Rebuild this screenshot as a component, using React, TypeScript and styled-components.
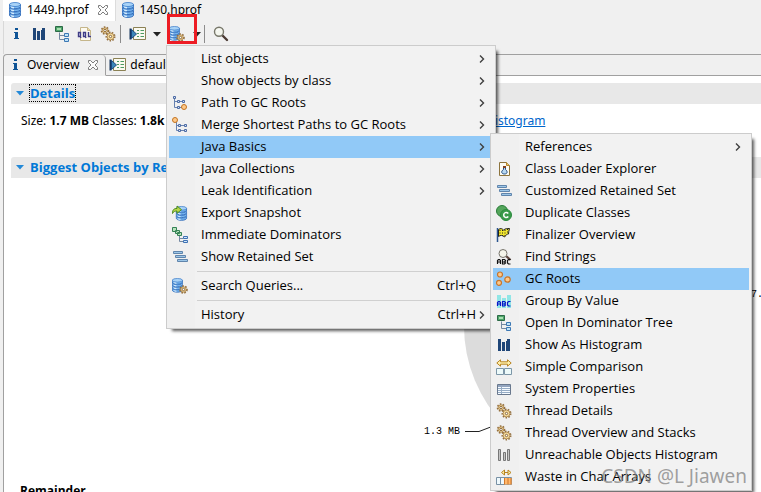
import React from "react";
import styled, { createGlobalStyle, css } from "styled-components";

const GlobalStyle = createGlobalStyle`
  *, *::before, *::after { box-sizing: border-box; }
  html, body { margin: 0; height: 100%; overflow: hidden; }
  body { background: #f0f0f0; color: #000; font-family: "Open Sans", "Noto Sans", sans-serif; font-size: 13px; line-height: 16px; }
  #root { height: 100%; }
  button { margin: 0; padding: 0; border: 0; background: none; color: inherit; font: inherit; text-align: left; }
  svg { display: block; flex: none; }
`;

/* ---------- icons ---------- */

const Icon = ({ children }: { children: React.ReactNode }) => (
  <svg width="16" height="16" viewBox="0 0 16 16" aria-hidden="true">{children}</svg>
);

const Disc = ({ y }: { y: number }) => (
  <>
    <path d={`M2.500 ${y}v2c0 1.200 2.400 2.200 5.500 2.200s5.500-1 5.500-2.200v-2z`} fill="#79b8f0" stroke="#2c67b6" strokeWidth=".9" />
    <path d={`M4 ${y + 1.500}v1.500c.8.6 1.800.8 3 .9V${y + 2}z`} fill="#d3ebfd" />
    <ellipse cx="8" cy={y} rx="5.500" ry="2" fill="#a9d3f7" stroke="#3c7cca" strokeWidth=".8" />
  </>
);

const Cylinder = () => (
  <>
    <Disc y={11.200} />
    <Disc y={8.300} />
    <Disc y={5.400} />
    <Disc y={2.500} />
  </>
);

const Gear = ({ x, y, r }: { x: number; y: number; r: number }) => (
  <g>
    <circle cx={x} cy={y} r={r} fill="none" stroke="#94703f" strokeWidth="2" strokeDasharray="1.500 1.300" />
    <circle cx={x} cy={y} r={r - 0.600} fill="#f6dc9c" stroke="#a57c45" strokeWidth=".8" />
    <circle cx={x} cy={y} r="1.200" fill="#fff" stroke="#7d5a30" strokeWidth=".9" />
  </g>
);

const DbIcon = () => <Icon><Cylinder /></Icon>;
const DbGearIcon = () => (
  <Icon>
    <g transform="translate(-2 0) scale(.92)"><Cylinder /></g>
    <Gear x={11.500} y={11.500} r={3.300} />
  </Icon>
);
const ExportIcon = () => (
  <Icon>
    <g transform="translate(2 1) scale(.93)"><Cylinder /></g>
    <path d="M.5 8.500C.5 4.500 2 3.500 5 3.500V1l4.500 3.700L5 8.300V6C3 6 1.500 6.500.5 8.500z" fill="#b7d84a" stroke="#4f8a1f" />
  </Icon>
);
const InfoIcon = () => (
  <Icon><path d="M7 2h3v2H7zM6 6h4v6h1v1H6v-1h1V7H6z" fill="#0f5496" /></Icon>
);
const BarsIcon = ({ muted = false }: { muted?: boolean }) => (
  <Icon>
    {muted ? (
      <path d="M2.500 2.500h2v11h-2zM7.500 5.500h2v8h-2zM11.500 2.500h2v11h-2z" fill="#c4c4c4" stroke="#777" />
    ) : (
      <path d="M2 2h3v12H2zM6 5h3v9H6zM10 4h1v10h-1zM11 2h3v12h-3z" fill="#1f4678" />
    )}
  </Icon>
);
const TreeIcon = () => (
  <Icon>
    <path d="M5.500 6.500v7h5M5.500 9.500h5" fill="none" stroke="#7488a2" />
    <path d="M1.500.5h7v5h-7z" fill="#4fa56a" stroke="#2c6a47" />
    <path d="M3 2h4v2H3z" fill="#a8dfb0" />
    <path d="M10.500 7.500h4v3h-4zM10.500 12.500h4v3h-4z" fill="#bfe2f8" stroke="#3c78b4" />
  </Icon>
);
const OqlIcon = () => (
  <Icon>
    <path d="M3.500 1.500h7l3 3v10h-10z" fill="#fdfaf0" stroke="#c5b68b" />
    <path d="M10.500 1.500v3h3" fill="#ead9a3" stroke="#c5b68b" />
    <path d="M1.500 6.500h2v4h-2zM6.500 6.500h2v4h-2zM11.500 6v4.500H14M3 10l1 2M8 10l1 2" fill="#eef" stroke="#3f3c85" strokeWidth="1.400" />
  </Icon>
);
const GearsIcon = () => (
  <Icon><Gear x={5} y={4.500} r={3.300} /><Gear x={10.500} y={10.500} r={4} /></Icon>
);
const QueryIcon = () => (
  <svg width="17" height="16" viewBox="0 0 17 16" aria-hidden="true">
    <path d="M4.500 1.500h12v12h-12z" fill="#fbfaf0" stroke="#8b8154" />
    <path d="M8 4.500h2M8 7.500h2M8 10.500h2M11.500 4.500h3.500M11.500 7.500h3.500M11.500 10.500h3.500" stroke="#4d9a62" />
    <path d="M1.500 2.500v11" stroke="#16365f" strokeWidth="2" />
    <path d="M2.500 3.500 7.500 8l-5 4.500z" fill="#3d87b8" stroke="#1b4a82" />
  </svg>
);
const SearchIcon = () => (
  <Icon>
    <path d="m9.500 9.500 4.500 4.500" stroke="#4c3b34" strokeWidth="2.400" strokeLinecap="round" />
    <circle cx="6" cy="5.800" r="4.500" fill="#f4f6ee" stroke="#77776a" strokeWidth="1.400" />
    <path d="M4 5c.4-1 1.200-1.500 2.400-1.500" fill="none" stroke="#fff" />
  </Icon>
);
const PathIcon = ({ rootFirst = false }: { rootFirst?: boolean }) => (
  <Icon>
    {rootFirst ? (
      <>
        <path d="M4.500 5v8.500h9M4.500 8.500h9" fill="none" stroke="#6681b0" />
        <path d="M6.500 7.500h2v2h-2zM12.500 7.500h2v2h-2zM6.500 12.500h2v2h-2zM12.500 12.500h2v2h-2z" fill="#d9e4f4" stroke="#4c6ba4" />
        <circle cx="3" cy="3" r="2.500" fill="#fdc98a" stroke="#c4721f" />
      </>
    ) : (
      <>
        <path d="M2.500 2v10.500h9M2.500 6.500h9" fill="none" stroke="#6681b0" />
        <path d="M1.500 1.500h2v2h-2zM5.500 5.500h2v2h-2zM10.500 5.500h2v2h-2zM5.500 11.500h2v2h-2z" fill="#d9e4f4" stroke="#4c6ba4" />
        <circle cx="12" cy="12" r="2.500" fill="#fdc98a" stroke="#c4721f" />
      </>
    )}
  </Icon>
);
const DominatorsIcon = () => (
  <Icon>
    <path d="M7.500 9v5.500h4M7.500 11.500h4" fill="none" stroke="#7488a2" />
    <path d="M.5.5h4v4h-4zM3.500 3.500h4v3h-4zM5.500 5.500h4v3h-4z" fill="#b8e2bd" stroke="#348154" />
    <path d="M11.500 9.500h4v2h-4zM11.500 13.500h4v2h-4z" fill="#d1e7fa" stroke="#3f72b4" />
  </Icon>
);
const RetainedIcon = () => (
  <Icon>
    <path d="M1.500 2.500h9v2h-9zM3.500 6.500h10v2h-10zM5.500 10.500h10v2h-10z" fill="#9cc6e8" stroke="#6085ac" />
  </Icon>
);
const LoaderIcon = () => (
  <Icon>
    <path d="M3.500 1.500h7l3 3v10h-10z" fill="#fdfcf4" stroke="#8d743e" />
    <path d="M10.500 1.500v3h3" fill="#e7c56b" stroke="#bb872c" />
    <path d="M7.500 6.500v2c-3 2-2 4.500 1 4.500s3.500-2.500 1-4.500v-2z" fill="#b9d9f3" stroke="#214b83" />
    <path d="M7 5h3v2H7z" fill="#834221" />
  </Icon>
);
const DuplicateIcon = () => (
  <Icon>
    <circle cx="6" cy="6" r="5.500" fill="#55a65c" stroke="#287c37" />
    <circle cx="10" cy="10" r="5.500" fill="#3a9b4b" stroke="#2b8a3d" />
    <path d="M12.300 8.500c-1.800-2-4.600-.8-4.600 1.500s2.800 3.500 4.600 1.500" fill="none" stroke="#fff" strokeWidth="1.500" />
  </Icon>
);
const FlagIcon = () => (
  <Icon>
    <path d="M1.500 1v14" stroke="#2a5590" strokeWidth="1.500" />
    <path d="M2.500 2.500c2-1.500 3.500-1 5 .5 2-1.500 3.500-1.500 6-1.500-.5 2-1 3.500-1 5.500-1.500 0-2.500 1-4 3-2-2-4-2-6-.5z" fill="#f2e72e" stroke="#222" />
    <path d="M4 3v5M6.500 3v6M9 3v6M11.500 2v5" stroke="#222" strokeDasharray="1 1.500" />
  </Icon>
);
const Letters = ({ color }: { color: string }) => (
  <path d="M1.500 15v-3.500l1-1h1l1 1V15M1.500 13h3M6.500 10.500h2l1 1v.5l-1 1 1 1-1 1h-2zM6.500 13h2M14.500 10.500h-2l-1 1V14l1 1h2" fill="none" stroke={color} strokeWidth="1.200" />
);
const FindIcon = () => (
  <Icon>
    <path d="m10 7 4.500 4" stroke="#5c443c" strokeWidth="2.200" />
    <circle cx="7" cy="4.500" r="4" fill="#f4f4ea" stroke="#76736b" />
    <Letters color="#111" />
  </Icon>
);
const GroupIcon = () => (
  <Icon>
    <path d="M1 2h4v13H1zM6 5h4v10H6zM11 2h4v13h-4z" fill="#91e6e6" />
    <g transform="translate(0 -2)"><Letters color="#0815c8" /></g>
  </Icon>
);
const RootsIcon = () => (
  <Icon>
    <g fill="#fcc98c" stroke="#c9752a" strokeWidth="1.200">
      <circle cx="4" cy="3.500" r="2.500" /><circle cx="3" cy="11.800" r="2.500" /><circle cx="11.500" cy="8.500" r="2.700" />
    </g>
  </Icon>
);
const CompareIcon = () => (
  <Icon>
    <path d="M.8 4 4.500.8v2h7v-2L15.200 4l-3.700 3.200v-2h-7v2z" fill="#fff0aa" stroke="#b88420" />
    <path d="M.5 9.500h7v6h-7zM8.500 9.500h7v6h-7z" fill="#edfafa" stroke="#7d97a8" />
  </Icon>
);
const TableIcon = () => (
  <Icon>
    <path d="M1.500 3.500h13v10h-13z" fill="#f6fbff" stroke="#69788d" />
    <path d="M2 4h12v2H2z" fill="#93a5bf" />
    <path d="M5.500 6v7M2 7.500h12M2 9.500h12M2 11.500h12" stroke="#96acc5" />
  </Icon>
);
const WasteIcon = () => (
  <Icon>
    <path d="M5.500 3.500 8.500 1v5zM15 3.500 12 1v5zM8 3.500h4" fill="#fff0aa" stroke="#b88420" />
    <path d="M.5 8.500h15v7H.5z" fill="#eef8fc" stroke="#7891a5" />
    <path d="M8 9h7.500v6.500H8z" fill="#ffb76b" />
    <path d="M4.500 9v6" stroke="#7891a5" />
    <path d="M8.500 9v6.500M12 9v6.500M15 9v6.500" stroke="#d27629" />
  </Icon>
);
const CloseIcon = () => (
  <svg width="12" height="12" viewBox="0 0 12 12" aria-hidden="true">
    <path d="M1.500 1.500h2L6 4l2.500-2.500h2v2L8 6l2.500 2.500v2h-2L6 8l-2.500 2.500h-2v-2L4 6 1.500 3.500z" fill="#fbfbfb" stroke="#7c7c7c" />
  </svg>
);
const Chevron = () => (
  <svg width="6" height="10" viewBox="0 0 6 10" aria-hidden="true">
    <path d="M1 1.500 4.500 5 1 8.500" fill="none" stroke="#3f3f3f" strokeWidth="1.400" />
  </svg>
);
const Triangle = ({ blue = false }: { blue?: boolean }) => (
  <svg width="8" height="5" viewBox="0 0 8 5" aria-hidden="true">
    <path d="M0 0h8L4 4.500z" fill={blue ? "#2389d8" : "#222"} />
  </svg>
);

/* ---------- page parts ---------- */

const Page = styled.div`
  position: relative;
  display: flex;
  flex-direction: column;
  height: 100%;
  padding-left: 3px;
  overflow: hidden;
  background: #f0f0f0;
`;

const FileTabs = styled.div`
  display: flex;
  flex: none;
  height: 21px;
`;

const FileTab = styled.button<{ $active?: boolean }>`
  display: flex;
  align-items: center;
  gap: 4px;
  padding: 0 6px 2px 4px;
  border-right: 1px solid ${(p) => (p.$active ? "#dcdcdc" : "transparent")};
  background: ${(p) => (p.$active ? "#fff" : "transparent")};
  font-family: "Noto Sans", sans-serif;
  font-size: 12px;
  svg:nth-of-type(2) { margin-left: 4px; }
`;

const Toolbar = styled.div`
  display: flex;
  flex: none;
  align-items: center;
  height: 33px;
  padding-bottom: 7px;
  border-left: 1px solid #d8d8d8;
`;

const Tool = styled.button<{ $wide?: boolean }>`
  position: relative;
  display: flex;
  flex: none;
  justify-content: center;
  align-items: center;
  width: ${(p) => (p.$wide ? 28 : 23)}px;
  height: 22px;
`;

const ToolArrow = styled(Tool)`
  width: 12px;
`;

const Divider = styled.span`
  width: 1px;
  height: 18px;
  margin: 0 2px 0 1px;
  background: #8c8c8c;
`;

const RedMark = styled.span`
  position: absolute;
  z-index: 5;
  inset: -9px -6px 1px 4px;
  border: 3px solid #ed1c24;
`;

const Views = styled.div`
  display: flex;
  flex: none;
  height: 22px;
  border-top: 1px solid #a0a0a0;
  border-left: 1px solid #a0a0a0;
  border-top-left-radius: 4px;
`;

const ViewTab = styled.button<{ $active?: boolean }>`
  display: flex;
  align-items: center;
  gap: 4px;
  padding: 0 6px 0 3px;
  border-right: ${(p) => (p.$active ? "1px solid #a0a0a0" : "0")};
  border-bottom: 1px solid ${(p) => (p.$active ? "#f0f0f0" : "#a0a0a0")};
  border-top-right-radius: 4px;
  font-family: "Noto Sans", sans-serif;
  font-size: 12px;
  svg:nth-of-type(2) { margin-left: 4px; }
`;

const ViewsRest = styled.div`
  flex: 1;
  border-bottom: 1px solid #a0a0a0;
`;

const Editor = styled.main`
  flex: 1;
  min-height: 0;
  padding: 7px 0 0 7px;
  border-left: 1px solid #a0a0a0;
  background: #fff;
`;

const SectionTitle = styled.h2<{ $focused?: boolean }>`
  display: flex;
  align-items: center;
  gap: 6px;
  height: 21px;
  margin: 0;
  padding: 0 0 1px 5px;
  border-radius: 3px 0 0 0;
  background: #e8e8e8;
  color: #0078d7;
  font-size: 13px;
  font-weight: 700;
  white-space: nowrap;
  button { outline: ${(p) => (p.$focused ? "1px dotted #000" : "none")}; }
`;

const Facts = styled.p`
  display: flex;
  height: 53px;
  margin: 0;
  padding: 8px 0 0 10px;
  font-family: "Noto Sans", sans-serif;
  font-size: 12px;
  line-height: 18px;
  white-space: nowrap;
  a { color: #0066cc; font-size: 12px; }
`;

const FactText = styled.span`
  flex: 0 0 465px;
`;

const Chart = styled.svg`
  width: calc(100% - 409px);
  height: 303px;
  margin-left: 409px;
  font: 10px "Liberation Mono", monospace;
`;

const Remainder = styled.strong`
  display: block;
  padding-left: 9px;
  font-size: 12px;
  line-height: 20px;
`;

/* ---------- menus ---------- */

const MenuPanel = styled.div<{ $sub?: boolean }>`
  position: absolute;
  z-index: 2;
  padding: 2px;
  border: 1px solid #ccc;
  background: linear-gradient(90deg, #f0f0f0 28px, #f2f2f2 28px);
  box-shadow: 4px 4px 3px -2px rgba(0, 0, 0, 0.65);
  ${(p) =>
    p.$sub
      ? css`left: 490px; top: 133px; width: 262px; z-index: 3;`
      : css`left: 166px; top: 45px; width: 330px;`}
`;

const MenuItem = styled.button<{ $selected?: boolean }>`
  display: grid;
  grid-template-columns: 32px 1fr auto 17px;
  align-items: center;
  width: 100%;
  height: 22px;
  background: ${(p) => (p.$selected ? "#91c9f7" : "transparent")};
  line-height: 20px;
  white-space: nowrap;
`;

const ItemText = styled.span`
  padding-bottom: 2px;
`;

const IconCell = styled.span`
  padding-left: 3px;
`;

const MenuRule = styled.hr`
  height: 1px;
  margin: 3px 0 3px 28px;
  border: 0;
  background: #d0d0d0;
`;

const Watermark = styled.div`
  position: absolute;
  z-index: 4;
  right: 14px;
  bottom: 5px;
  color: rgba(130, 130, 130, 0.75);
  font: 19px/22px "Noto Sans", sans-serif;
  pointer-events: none;
`;

type Entry = { label: string; icon?: React.ReactNode; keys?: string; more?: boolean; selected?: boolean; rule?: boolean };

const queryMenu: Entry[] = [
  { label: "List objects", more: true },
  { label: "Show objects by class", more: true },
  { label: "Path To GC Roots", icon: <PathIcon />, more: true },
  { label: "Merge Shortest Paths to GC Roots", icon: <PathIcon rootFirst />, more: true },
  { label: "Java Basics", more: true, selected: true },
  { label: "Java Collections", more: true },
  { label: "Leak Identification", more: true },
  { label: "Export Snapshot", icon: <ExportIcon /> },
  { label: "Immediate Dominators", icon: <DominatorsIcon /> },
  { label: "Show Retained Set", icon: <RetainedIcon /> },
  { label: "Search Queries...", icon: <DbGearIcon />, keys: "Ctrl+Q", rule: true },
  { label: "History", keys: "Ctrl+H", more: true, rule: true },
];

const basicsMenu: Entry[] = [
  { label: "References", more: true },
  { label: "Class Loader Explorer", icon: <LoaderIcon /> },
  { label: "Customized Retained Set", icon: <RetainedIcon /> },
  { label: "Duplicate Classes", icon: <DuplicateIcon /> },
  { label: "Finalizer Overview", icon: <FlagIcon /> },
  { label: "Find Strings", icon: <FindIcon /> },
  { label: "GC Roots", icon: <RootsIcon />, selected: true },
  { label: "Group By Value", icon: <GroupIcon /> },
  { label: "Open In Dominator Tree", icon: <TreeIcon /> },
  { label: "Show As Histogram", icon: <BarsIcon /> },
  { label: "Simple Comparison", icon: <CompareIcon /> },
  { label: "System Properties", icon: <TableIcon /> },
  { label: "Thread Details", icon: <GearsIcon /> },
  { label: "Thread Overview and Stacks", icon: <GearsIcon /> },
  { label: "Unreachable Objects Histogram", icon: <BarsIcon muted /> },
  { label: "Waste in Char Arrays", icon: <WasteIcon /> },
];

const Menu = ({ entries, sub = false }: { entries: Entry[]; sub?: boolean }) => (
  <MenuPanel role="menu" $sub={sub}>
    {entries.map((e) => (
      <React.Fragment key={e.label}>
        {e.rule && <MenuRule />}
        <MenuItem role="menuitem" aria-haspopup={e.more} $selected={e.selected}>
          <IconCell>{e.icon}</IconCell>
          <ItemText>{e.label}</ItemText>
          <ItemText>{e.keys}</ItemText>
          <IconCell>{e.more && <Chevron />}</IconCell>
        </MenuItem>
      </React.Fragment>
    ))}
  </MenuPanel>
);

export default function App() {
  return (
    <>
      <GlobalStyle />
      <Page>
        <FileTabs role="tablist">
          <FileTab role="tab" aria-selected $active><DbIcon />1449.hprof<CloseIcon /></FileTab>
          <FileTab role="tab"><DbIcon />1450.hprof</FileTab>
        </FileTabs>
        <Toolbar role="toolbar">
          <Tool aria-label="Overview"><InfoIcon /></Tool>
          <Tool aria-label="Histogram"><BarsIcon /></Tool>
          <Tool aria-label="Dominator tree"><TreeIcon /></Tool>
          <Tool aria-label="OQL"><OqlIcon /></Tool>
          <Tool aria-label="Threads"><GearsIcon /></Tool>
          <Divider />
          <Tool $wide aria-label="Run report"><QueryIcon /></Tool>
          <ToolArrow aria-label="Report list"><Triangle /></ToolArrow>
          <Tool $wide aria-label="Query browser"><DbGearIcon /><RedMark /></Tool>
          <ToolArrow aria-label="Query list"><Triangle /></ToolArrow>
          <Divider />
          <Tool $wide aria-label="Search"><SearchIcon /></Tool>
        </Toolbar>
        <Views role="tablist">
          <ViewTab role="tab" aria-selected $active><InfoIcon />Overview<CloseIcon /></ViewTab>
          <ViewTab role="tab"><QueryIcon />default</ViewTab>
          <ViewsRest />
        </Views>
        <Editor>
          <SectionTitle $focused><Triangle blue /><button>Details</button></SectionTitle>
          <Facts>
            <FactText>Size: <b>1.7 MB</b> Classes: <b>1.8k</b></FactText>
            <a href="#histogram">Histogram</a>
          </Facts>
          <SectionTitle><Triangle blue /><button>Biggest Objects by Retained Size</button></SectionTitle>
          <Chart role="img" aria-label="Retained size by object">
            <circle cx="186" cy="148" r="142" fill="#dcdcdc" />
            <path d="M45 253.500h14l13-5" fill="none" stroke="#222" />
            <text x="4" y="256">1.3 MB</text>
            <text x="331" y="119">7.</text>
          </Chart>
          <Remainder>Remainder</Remainder>
        </Editor>
        <Menu entries={queryMenu} />
        <Menu entries={basicsMenu} sub />
        <Watermark>CSDN @L Jiawen</Watermark>
      </Page>
    </>
  );
}
